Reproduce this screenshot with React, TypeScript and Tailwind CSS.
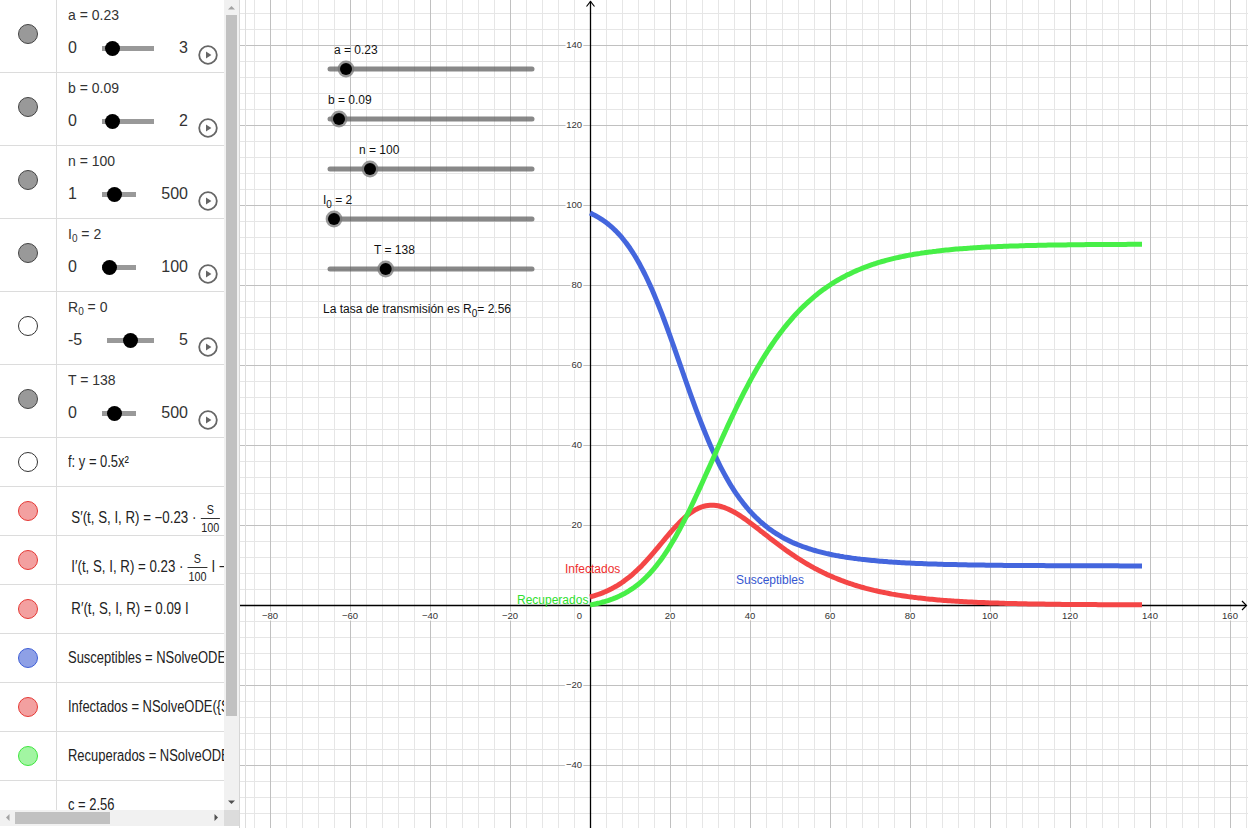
import React, { useMemo } from 'react';

// ---------- left algebra panel ----------

const MARBLE = {
  gray: 'bg-[#999999] border-[#444444]',
  white: 'bg-white border-[#333333]',
  red: 'bg-[#f3a0a0] border-[#e53935]',
  blue: 'bg-[#8ea0e6] border-[#3f5fd6]',
  green: 'bg-[#a2f5a2] border-[#3ee63e]',
};

const Marble = ({ cls }: { cls: string }) => (
  <div className={`w-[20px] h-[20px] rounded-full border ${cls}`} />
);

const PlayButton = () => (
  <svg width="20" height="20" viewBox="0 0 20 20" className="shrink-0">
    <circle cx="10" cy="10" r="8.8" fill="none" stroke="#666" strokeWidth="1.8" />
    <polygon points="8,6.6 13.4,10 8,13.4" fill="#666" />
  </svg>
);

interface SliderRowProps {
  label: React.ReactNode;
  min: string;
  max: string;
  minCls: string;
  trackCls: string;
  maxCls: string;
  knobCls: string;
  marble: string;
}

function SliderRow({ label, min, max, minCls, trackCls, maxCls, knobCls, marble }: SliderRowProps) {
  return (
    <div className="flex h-[73px] border-b border-[#dcdcdc]">
      <div className="w-[57px] shrink-0 border-r border-[#dcdcdc] flex items-center justify-center pb-[4px]">
        <Marble cls={marble} />
      </div>
      <div className="flex-1 pl-[11px] pt-[6px] text-[#333]">
        <div className="h-[18px] leading-[18px] text-[14px]">{label}</div>
        <div className="mt-[12px] h-[24px] flex items-center text-[16px]">
          <div className={minCls}>{min}</div>
          <div className={`relative h-[5px] bg-[#999] ${trackCls}`}>
            <div className={`absolute top-[-5px] w-[15px] h-[15px] rounded-full bg-black ${knobCls}`} />
          </div>
          <div className={`text-right ${maxCls}`}>{max}</div>
          <div className="ml-[10px] translate-y-[7px]">
            <PlayButton />
          </div>
        </div>
      </div>
    </div>
  );
}

function EqRow({
  marble,
  children,
  shift,
  math,
}: {
  marble?: string;
  children: React.ReactNode;
  shift?: boolean;
  math?: boolean;
}) {
  return (
    <div className="flex h-[49px] border-b border-[#dcdcdc]">
      <div className="w-[57px] shrink-0 border-r border-[#dcdcdc] flex items-center justify-center">
        {marble && <Marble cls={marble} />}
      </div>
      <div
        className={`flex-1 flex items-center pl-[11px] overflow-hidden whitespace-nowrap text-[16px] text-[#222] ${
          shift ? 'pt-[14px]' : ''
        }`}
      >
        <span className={`flex items-center shrink-0 origin-left ${math ? 'scale-x-[0.83]' : 'scale-x-[0.81]'}`}>
          {children}
        </span>
      </div>
    </div>
  );
}

const Frac = ({ n, d }: { n: string; d: string }) => (
  <span className="inline-flex flex-col items-center mx-[5px] text-[13px] leading-[13px]">
    <span className="pb-[2px]">{n}</span>
    <span className="border-t border-[#333] px-[1px] pt-[2px]">{d}</span>
  </span>
);

const Tri = ({ pts, color }: { pts: string; color: string }) => (
  <svg width="15" height="15" viewBox="0 0 15 15">
    <polygon points={pts} fill={color} />
  </svg>
);

function LeftPanel() {
  return (
    <div className="w-[240px] h-full shrink-0 border-r border-[#d6d6d6] flex flex-col">
      <div className="h-[810px] flex">
        <div className="w-[224px] h-full overflow-hidden">
          <SliderRow label="a = 0.23" min="0" max="3" minCls="w-[34px]" trackCls="w-[52px]" maxCls="w-[34px]" knobCls="left-[2.5px]" marble={MARBLE.gray} />
          <SliderRow label="b = 0.09" min="0" max="2" minCls="w-[34px]" trackCls="w-[52px]" maxCls="w-[34px]" knobCls="left-[3px]" marble={MARBLE.gray} />
          <SliderRow label="n = 100" min="1" max="500" minCls="w-[34px]" trackCls="w-[34px]" maxCls="w-[52px]" knobCls="left-[4.5px]" marble={MARBLE.gray} />
          <SliderRow
            label={<>I<sub className="text-[10px]">0</sub> = 2</>}
            min="0" max="100" minCls="w-[34px]" trackCls="w-[34px]" maxCls="w-[52px]" knobCls="left-[-0.5px]" marble={MARBLE.gray}
          />
          <SliderRow
            label={<>R<sub className="text-[10px]">0</sub> = 0</>}
            min="-5" max="5" minCls="w-[39px]" trackCls="w-[47px]" maxCls="w-[34px]" knobCls="left-[16px]" marble={MARBLE.white}
          />
          <SliderRow label="T = 138" min="0" max="500" minCls="w-[34px]" trackCls="w-[34px]" maxCls="w-[52px]" knobCls="left-[4.5px]" marble={MARBLE.gray} />

          <EqRow marble={MARBLE.white}>f: y = 0.5x²</EqRow>
          <EqRow marble={MARBLE.red} shift math>
            <span className="pl-[4px]">S′(t, S, I, R) = −0.23 ·</span>
            <Frac n="S" d="100" />
            <span>I</span>
          </EqRow>
          <EqRow marble={MARBLE.red} shift math>
            <span className="pl-[4px]">I′(t, S, I, R) = 0.23 ·</span>
            <Frac n="S" d="100" />
            <span>I − 0.09 I</span>
          </EqRow>
          <EqRow marble={MARBLE.red} math>
            <span className="pl-[4px]">R′(t, S, I, R) = 0.09 I</span>
          </EqRow>
          <EqRow marble={MARBLE.blue}>Susceptibles = NSolveODE({'{'}S′, I′, R′{'}'}, 0, {'{'}98, 2, 0{'}'}, T, 1)</EqRow>
          <EqRow marble={MARBLE.red}>Infectados = NSolveODE({'{'}S′, I′, R′{'}'}, 0, {'{'}98, 2, 0{'}'}, T, 2)</EqRow>
          <EqRow marble={MARBLE.green}>Recuperados = NSolveODE({'{'}S′, I′, R′{'}'}, 0, {'{'}98, 2, 0{'}'}, T, 3)</EqRow>
          <EqRow>c = 2.56</EqRow>
        </div>
        {/* vertical scrollbar */}
        <div className="w-[15px] h-full bg-[#f1f1f1] flex flex-col">
          <Tri pts="4,9.5 7.5,6 11,9.5" color="#a3a3a3" />
          <div className="h-[701px] mx-[2px] bg-[#c1c1c1]" />
          <div className="flex-1" />
          <Tri pts="4,5.5 7.5,9 11,5.5" color="#505050" />
        </div>
      </div>
      <div className="h-[16px] flex">
        <div className="w-[224px] bg-[#f1f1f1] flex">
          <Tri pts="9.5,4 6,7.5 9.5,11" color="#a3a3a3" />
          <div className="w-[95px] my-[2px] bg-[#c1c1c1]" />
          <div className="flex-1" />
          <Tri pts="5.5,4 9,7.5 5.5,11" color="#505050" />
        </div>
        <div className="w-[15px] bg-[#dcdcdc]" />
      </div>
    </div>
  );
}

// ---------- graphics view ----------

const OX = 350; // screen x 590
const OY = 605;
const U = 4; // px per unit

function solve() {
  const a = 0.23, b = 0.09, n = 100;
  const f = (S: number, I: number) => [-(a * S * I) / n, (a * S * I) / n - b * I, b * I];
  let S = 98, I = 2, R = 0;
  const dt = 0.05;
  const out: number[][] = [[0, S, I, R]];
  const steps = Math.round(138 / dt);
  for (let k = 1; k <= steps; k++) {
    const k1 = f(S, I);
    const k2 = f(S + (dt / 2) * k1[0], I + (dt / 2) * k1[1]);
    const k3 = f(S + (dt / 2) * k2[0], I + (dt / 2) * k2[1]);
    const k4 = f(S + dt * k3[0], I + dt * k3[1]);
    S += (dt / 6) * (k1[0] + 2 * k2[0] + 2 * k3[0] + k4[0]);
    I += (dt / 6) * (k1[1] + 2 * k2[1] + 2 * k3[1] + k4[1]);
    R += (dt / 6) * (k1[2] + 2 * k2[2] + 2 * k3[2] + k4[2]);
    if (k % 10 === 0) out.push([k * dt, S, I, R]);
  }
  return out;
}

const toPath = (pts: number[][], idx: number) =>
  pts
    .map((p, i) => `${i ? 'L' : 'M'}${(OX + U * p[0]).toFixed(1)} ${(OY - U * p[idx]).toFixed(1)}`)
    .join(' ');

const range = (a: number, b: number) => Array.from({ length: b - a + 1 }, (_, i) => a + i);

const fmt = (v: number) => (v < 0 ? `−${-v}` : `${v}`);

const sliders = [
  { y: 69, knob: 106 },
  { y: 119, knob: 99 },
  { y: 169, knob: 130 },
  { y: 219, knob: 94 },
  { y: 269, knob: 145.7 },
];

function Graph() {
  const data = useMemo(solve, []);
  const cols = range(-21, 41);
  const rows = range(-37, 13);

  return (
    <div className="flex-1 h-full overflow-hidden bg-white">
      <svg width="1008" height="828" className="block">
        {/* grid */}
        {cols.filter((k) => k % 5 !== 0).map((k) => (
          <line key={`mx${k}`} x1={OX + 16 * k + 0.5} x2={OX + 16 * k + 0.5} y1={0} y2={828} stroke="#e6e6e6" />
        ))}
        {rows.filter((k) => k % 5 !== 0).map((k) => (
          <line key={`my${k}`} y1={OY + 16 * k + 0.5} y2={OY + 16 * k + 0.5} x1={0} x2={1008} stroke="#e6e6e6" />
        ))}
        {cols.filter((k) => k % 5 === 0 && k !== 0).map((k) => (
          <line key={`Mx${k}`} x1={OX + 16 * k + 0.5} x2={OX + 16 * k + 0.5} y1={0} y2={828} stroke="#c0c0c0" />
        ))}
        {rows.filter((k) => k % 5 === 0 && k !== 0).map((k) => (
          <line key={`My${k}`} y1={OY + 16 * k + 0.5} y2={OY + 16 * k + 0.5} x1={0} x2={1008} stroke="#c0c0c0" />
        ))}
        <line x1={5.5} x2={5.5} y1={0} y2={828} stroke="#dddddd" />

        {/* axes */}
        <line x1={0} x2={1006} y1={OY + 0.5} y2={OY + 0.5} stroke="#000" strokeWidth="1.3" />
        <line x1={OX + 0.5} x2={OX + 0.5} y1={1} y2={828} stroke="#000" strokeWidth="1.3" />
        <polyline points={`${OX - 3.5},6.5 ${OX + 0.5},1.5 ${OX + 4.5},6.5`} fill="none" stroke="#000" strokeWidth="1.2" />
        <polyline points="1002,601 1006.5,605.5 1002,610" fill="none" stroke="#000" strokeWidth="1.2" />

        {/* axis labels */}
        <g fontSize="9.5" fill="#333" stroke="#fff" strokeWidth="3" paintOrder="stroke">
          {range(-4, 8).filter((k) => k !== 0).map((k) => (
            <text key={`lx${k}`} x={OX + 80 * k} y={619} textAnchor="middle">
              {fmt(20 * k)}
            </text>
          ))}
          <text x={342} y={619} textAnchor="end">0</text>
          {range(-2, 7).filter((k) => k !== 0).map((k) => (
            <text key={`ly${k}`} x={342} y={OY - 80 * k + 3} textAnchor="end">
              {fmt(20 * k)}
            </text>
          ))}
        </g>

        {/* curves */}
        <path d={toPath(data, 1)} fill="none" stroke="#4466dd" strokeWidth="5" strokeLinejoin="round" />
        <path d={toPath(data, 2)} fill="none" stroke="#f44646" strokeWidth="5" strokeLinejoin="round" />
        <path d={toPath(data, 3)} fill="none" stroke="#47ef47" strokeWidth="5" strokeLinejoin="round" />

        <g fontSize="12">
          <text x={325} y={573} fill="#ee2e2e">Infectados</text>
          <text x={277} y={604} fill="#2fe02f">Recuperados</text>
          <text x={496} y={583.5} fill="#3556d0">Susceptibles</text>
        </g>

        {/* sliders drawn on the canvas */}
        {sliders.map((s) => (
          <g key={s.y}>
            <line x1={90} x2={292} y1={s.y} y2={s.y} stroke="#555" strokeOpacity="0.7" strokeWidth="5" strokeLinecap="round" />
            <circle cx={s.knob} cy={s.y} r={8.4} fill="#777" fillOpacity="0.75" />
            <circle cx={s.knob} cy={s.y} r={6} fill="#000" />
          </g>
        ))}
        <g fontSize="12" fill="#111">
          <text x={94} y={54}>a = 0.23</text>
          <text x={88} y={104}>b = 0.09</text>
          <text x={119} y={154}>n = 100</text>
          <text x={83} y={204}>
            I<tspan fontSize="10" dy="4">0</tspan>
            <tspan dy="-4"> = 2</tspan>
          </text>
          <text x={134} y={254}>T = 138</text>
          <text x={83} y={313}>
            La tasa de transmisión es R<tspan fontSize="10" dy="4">0</tspan>
            <tspan dy="-4">= 2.56</tspan>
          </text>
        </g>
      </svg>
    </div>
  );
}

export default function App() {
  return (
    <div className="w-[1248px] h-[828px] flex overflow-hidden bg-white font-['Liberation_Sans',Arial,sans-serif]">
      <LeftPanel />
      <Graph />
    </div>
  );
}
